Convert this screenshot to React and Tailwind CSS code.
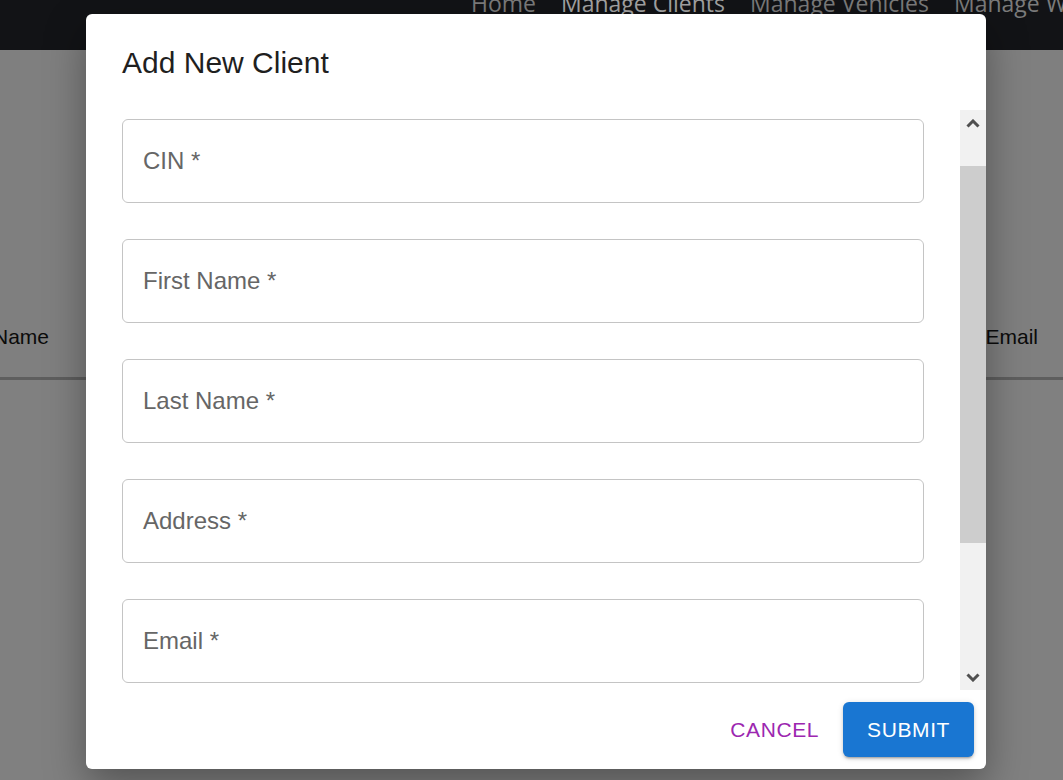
import React from 'react'

const fields = ["CIN", "First Name", "Last Name", "Address", "Email", "Phone"]

const App = () => {
  return (
    <div className="relative h-[780px] w-full overflow-hidden bg-[#808080]" style={{ fontFamily: '"Liberation Sans", Arial, sans-serif' }}>
      {/* page behind the dialog (already dimmed) */}
      <div className="h-[50px] bg-[#121316] overflow-hidden">
        <nav className="flex gap-[25px] pl-[471px] mt-[-14px] whitespace-nowrap text-[23px] text-[#7b7b7b]" style={{ fontFamily: '"Open Sans", sans-serif' }}>
          <span>Home</span>
          <span className="text-[#a3a3a3]">Manage Clients</span>
          <span>Manage Vehicles</span>
          <span>Manage Workers</span>
        </nav>
      </div>
      <div className="h-[330px] bg-[#7f7f7f] border-b-[3px] border-[#5e5e5e] flex items-end justify-between pb-[25px] text-[21px] text-[#0b0b0b]">
        <span className="ml-[-7px]">Name</span>
        <span className="mr-[25px]">Email</span>
      </div>

      {/* dialog */}
      <div className="absolute left-[86px] top-[14px] w-[900px] h-[755px] bg-white rounded-[6px] shadow-[0_16px_40px_rgba(0,0,0,0.35)] flex flex-col overflow-hidden">
        <h2 className="px-[36px] pt-[25px] pb-[23px] text-[30px] leading-[48px] text-[#1f1f1f]">Add New Client</h2>
        <div className="flex flex-1 min-h-0">
          <div className="flex-1 overflow-hidden pl-[36px] pr-[36px] pt-[9px] flex flex-col gap-[36px]">
            {fields.map((f) => (
              <div key={f} className="h-[84px] shrink-0 border border-[#c4c4c4] rounded-[6px] flex items-center px-[20px] text-[24px] text-[#666666]">
                {f} *
              </div>
            ))}
          </div>
          {/* scrollbar */}
          <div className="w-[26px] bg-[#f1f1f1] flex flex-col">
            <div className="h-[26px] flex items-center justify-center">
              <svg width="14" height="9" viewBox="0 0 14 9"><path d="M1.5 7.5 L7 2 L12.5 7.5" fill="none" stroke="#505050" strokeWidth="3" /></svg>
            </div>
            <div className="h-[30px]" />
            <div className="h-[377px] bg-[#cdcdcd]" />
            <div className="flex-1" />
            <div className="h-[26px] flex items-center justify-center">
              <svg width="14" height="9" viewBox="0 0 14 9"><path d="M1.5 1.5 L7 7 L12.5 1.5" fill="none" stroke="#505050" strokeWidth="3" /></svg>
            </div>
          </div>
        </div>
        <div className="h-[79px] flex items-center justify-end gap-[12px] px-[12px]">
          <button className="h-[55px] px-[12px] text-[21px] tracking-[0.6px] text-[#9c27b0] rounded-[6px]">CANCEL</button>
          <button className="h-[55px] px-[24px] text-[21px] tracking-[0.6px] text-white bg-[#1976d2] rounded-[6px] shadow-[0_3px_2px_-2px_rgba(0,0,0,0.2),0_2px_3px_0_rgba(0,0,0,0.14),0_1px_6px_0_rgba(0,0,0,0.12)]">SUBMIT</button>
        </div>
      </div>
    </div>
  )
}

export default App
